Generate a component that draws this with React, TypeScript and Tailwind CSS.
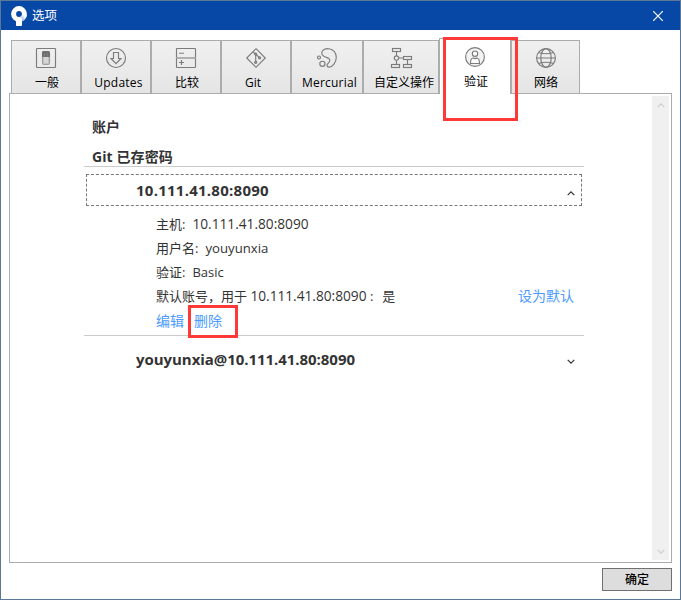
import * as React from 'react';
import clsx from 'clsx';

const sans = "font-['Open_Sans','Noto_Sans_CJK_SC',sans-serif]";

function SwitchIcon() {
  return (
    <IconBox>
      <rect x="0.5" y="0.5" width="19" height="19" rx="0.5" />
      <rect x="6.5" y="3.5" width="7" height="13" rx="1.5" stroke="#a0a0a0" fill="#c4c4c4" />
      <path d="M6 4.5 Q6 3 7.5 3 H12.5 Q14 3 14 4.5 V9 H6 Z" fill="#707070" stroke="none" />
      <path d="M8.5 5 V9 M11.5 5 V9" stroke="#7c7c7c" />
      <rect x="8" y="9" width="4" height="6" fill="#d6d6d6" stroke="none" />
    </IconBox>
  );
}

function DownloadIcon() {
  return (
    <IconBox>
      <circle cx="10" cy="10" r="9.5" />
      <path d="M7.5 4.5 H12.5 V10.5 H15 L10 15.7 L5 10.5 H7.5 Z" />
    </IconBox>
  );
}

function CompareIcon() {
  return (
    <IconBox>
      <rect x="0.5" y="0.5" width="19" height="19" rx="0.5" />
      <path d="M0 10 H20" stroke="#a0a0a0" strokeWidth="1.6" />
      <path d="M3 5.3 H8" stroke="#a0a0a0" strokeWidth="1.5" />
      <path d="M3 14.5 H8 M5.5 12 V17" />
    </IconBox>
  );
}

function GitIcon() {
  return (
    <IconBox>
      <path d="M10 0.7 L19.3 10 L10 19.3 L0.7 10 Z" />
      <path d="M6.8 3.8 L9.7 6.2 V13.8 M9.7 6.2 L13.3 9.5" />
      <circle cx="9.7" cy="6" r="1" fill="#777" />
      <circle cx="13.6" cy="9.8" r="1.1" fill="#aaa" />
      <circle cx="9.7" cy="14.3" r="1.1" fill="#aaa" />
    </IconBox>
  );
}

function MercurialIcon() {
  return (
    <IconBox>
      <path d="M4.8 5.2 C4.6 2 8 0.6 11.5 0.7 C16 0.9 19.5 4.6 19.3 9.4 C19.1 14.3 15.6 19.2 12 19.1 C9.6 19 9.4 16.6 11.2 15.2 C13.2 13.6 13.3 11.5 11.5 10.2 C9.8 9 5 9.2 4.8 5.2 Z" />
      <circle cx="2" cy="9.5" r="1.5" />
      <circle cx="5.4" cy="15.8" r="2.6" />
    </IconBox>
  );
}

function FlowIcon() {
  return (
    <IconBox>
      <rect x="1.5" y="0.5" width="8" height="3" />
      <circle cx="5.5" cy="10" r="2.2" />
      <rect x="12.5" y="8.5" width="8" height="3" />
      <rect x="0.5" y="16.5" width="8" height="3" />
      <rect x="12.5" y="16.5" width="8" height="3" />
      <path d="M5.5 3.5 V7.8 M5.5 12.2 V16.5 M7.7 10 H12.5 M16.5 11.5 V16.5" />
    </IconBox>
  );
}

function PersonIcon() {
  return (
    <IconBox>
      <circle cx="10" cy="10" r="9.4" fill="#f3f3f3" />
      <circle cx="10" cy="6.7" r="2.7" fill="#fff" />
      <path d="M5.5 16.5 C5.5 13.5 6.5 11 8.2 11 Q10 12.2 11.8 11 C13.5 11 14.5 13.5 14.5 16.5 Z" fill="#fff" />
    </IconBox>
  );
}

function GlobeIcon() {
  return (
    <IconBox>
      <circle cx="10" cy="10" r="9.4" />
      <ellipse cx="10" cy="10" rx="5.2" ry="9.4" />
      <path d="M0.6 10 H19.4 M2.5 4.5 Q10 7 17.5 4.5 M2.5 15.5 Q10 13 17.5 15.5" />
    </IconBox>
  );
}

function IconBox({ children }: { children: React.ReactNode }) {
  return (
    <svg className="block h-5 w-5 shrink-0 overflow-visible" viewBox="0 0 20 20" fill="none" stroke="#7c7c7c" strokeWidth="1.15">
      {children}
    </svg>
  );
}

function Chevron({ className, up }: { className: string; up?: boolean }) {
  return (
    <svg className={className} viewBox="0 0 8 5" fill="none" stroke="currentColor" strokeWidth="1.2">
      <path d={up ? 'M0.7 4.2 L4 0.9 L7.3 4.2' : 'M0.7 0.8 L4 4.1 L7.3 0.8'} />
    </svg>
  );
}

const tabs = [
  { label: '一般', icon: <SwitchIcon />, box: 'w-[70px]', text: 'ml-[2px]' },
  { label: 'Updates', icon: <DownloadIcon />, box: 'w-[70px]', text: 'ml-[5px] tracking-[0.25px]' },
  { label: '比较', icon: <CompareIcon />, box: 'w-[70px]', text: 'ml-[2px]' },
  { label: 'Git', icon: <GitIcon />, box: 'w-[70px]', text: '-ml-[6px]' },
  { label: 'Mercurial', icon: <MercurialIcon />, box: 'w-[72px]', text: 'ml-[5px] tracking-[0.2px]' },
  { label: '自定义操作', icon: <FlowIcon />, box: 'w-[76px]', text: 'ml-[6px]' },
  { label: '验证', icon: <PersonIcon />, box: 'w-[72px]', text: 'ml-[2px]', active: true },
  { label: '网络', icon: <GlobeIcon />, box: 'w-[69px]', text: 'ml-[1px]' },
];

function TabStrip() {
  return (
    <div className="flex h-14 items-end pl-[10px]">
      {tabs.map((tab) => (
        <div
          key={tab.label}
          className={clsx(
            'flex shrink-0 flex-col items-center border-x border-t border-[#acacac]',
            tab.box,
            tab.active
              ? 'z-10 -mb-px h-14 bg-white pt-2'
              : 'h-[53px] bg-linear-to-b from-[#f0f0f0] to-[#e5e5e5] pt-[7px]',
          )}
        >
          {tab.icon}
          <span className={clsx('mt-[6px] text-[12px] leading-[18px] whitespace-nowrap text-black', tab.text)}>
            {tab.label}
          </span>
        </div>
      ))}
    </div>
  );
}

function TitleBar() {
  return (
    <header className="flex h-[29px] shrink-0 items-center bg-[#0747a6] pl-[10px] pr-[17px] text-white">
      <svg className="block h-5 w-4" viewBox="0 0 16 20">
        <defs>
          <linearGradient id="stem" x1="1" y1="0" x2="0" y2="1">
            <stop offset="0.2" stopColor="#fff" />
            <stop offset="1" stopColor="#7fa3d8" />
          </linearGradient>
        </defs>
        <circle cx="8" cy="8" r="5.4" fill="none" stroke="#fff" strokeWidth="5" />
        <path d="M9.5 11 L11.5 9 L15.9 9 Q15 14 11 15.4 Z" fill="url(#stem)" />
        <rect x="5" y="12" width="6" height="8" rx="0.8" fill="#fff" />
      </svg>
      <h1 className="ml-[5px] text-[12.5px] leading-[18px]">选项</h1>
      <svg className="ml-auto block h-[10px] w-[10px]" viewBox="0 0 10 10" stroke="#fff" strokeWidth="1.2">
        <path d="M0 0 L10 10 M10 0 L0 10" />
      </svg>
    </header>
  );
}

function AccountDetails() {
  return (
    <div className="pl-[72px] text-[13px] leading-6 whitespace-pre text-[#333]">
      <p>主机:<span className="ml-[7px] text-[13.7px]">10.111.41.80:8090</span></p>
      <p>用户名:<span className="ml-[7px] text-[13.2px]">youyunxia</span></p>
      <p>验证:<span className="ml-[7px]">Basic</span></p>
      <div className="flex pr-[10px]">
        <p>默认账号，用于 <span className="text-[13.7px]">10.111.41.80:8090</span> :<span className="ml-[9px]">是</span></p>
        <a className="ml-auto text-[14px] text-[#4c9aff]">设为默认</a>
      </div>
      <div className="relative flex gap-[10px] pt-px text-[14px] text-[#4c9aff]">
        <a>编辑</a>
        <a>删除</a>
        <div className="absolute -top-[3px] left-8 h-[33px] w-[50px] border-3 border-[#ff3838]" />
      </div>
    </div>
  );
}

export default function App() {
  return (
    <div className={clsx('relative flex h-[600px] w-[681px] flex-col border border-[#5b7896] bg-white', sans)}>
      <TitleBar />

      <div className="pt-[7px]">
        <TabStrip />
      </div>

      <main className="mx-2 flex h-[470px] w-[663px] border border-[#acacac] bg-white">
        <div className="ml-[74px] w-[500px] pt-[21px]">
          <h2 className="pl-2 text-[14px] leading-6 font-bold text-[#333]">账户</h2>
          <h3 className="mt-[5px] h-[23px] border-b border-[#ccc] pl-2 text-[14px] leading-[25px] font-bold tracking-[0.1px] text-[#333]">
            Git 已存密码
          </h3>

          <div className="mt-[7px] ml-[2px] flex h-8 w-[496px] items-center border border-dashed border-[#777] pr-[6px] pl-[49px] text-[#333]">
            <span className="text-[15px] font-bold tracking-[0.25px]">10.111.41.80:8090</span>
            <Chevron up className="mt-[6px] ml-auto block h-[5px] w-2" />
          </div>

          <div className="mt-[6px] h-[124px] border-b border-[#ccc]">
            <AccountDetails />
          </div>

          <div className="flex h-[47px] items-center pr-[9px] pl-[52px] text-[#333]">
            <span className="text-[15px] font-bold tracking-[-0.05px]">youyunxia@10.111.41.80:8090</span>
            <Chevron className="mt-1 ml-auto block h-[5px] w-2" />
          </div>
        </div>

        <div className="mt-[2px] mr-[2px] mb-[2px] ml-auto flex w-[17px] flex-col items-center justify-between bg-[#f0f0f0] pt-[7px] pb-[6px] text-[#cdcdcd]">
          <Chevron up className="block h-[5px] w-2" />
          <Chevron className="block h-[5px] w-2" />
        </div>
      </main>

      <footer className="flex justify-end pt-[5px] pr-2">
        <button className="h-[23px] w-[70px] border border-[#707070] bg-[#ddd] text-[12px] leading-5 font-medium text-black">
          确定
        </button>
      </footer>

      {/* highlight over the active tab */}
      <div className="absolute top-9 left-[442px] z-20 h-[84px] w-[75px] border-3 border-[#ff3838]" />
    </div>
  );
}
